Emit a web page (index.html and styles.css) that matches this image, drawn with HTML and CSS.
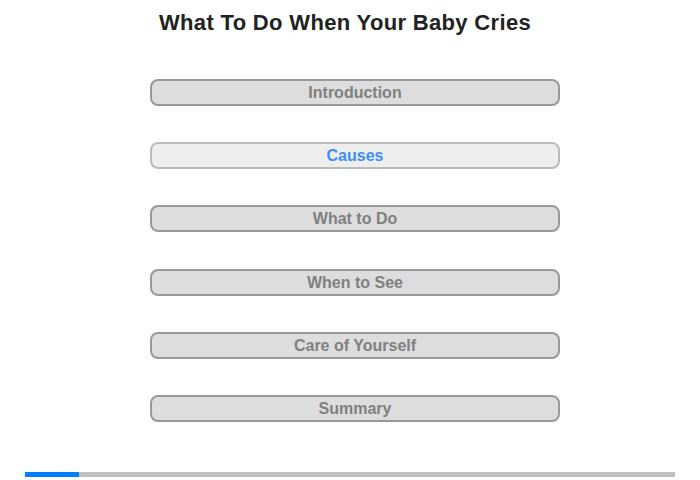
FILE: index.html
```html
<!DOCTYPE html>
<html lang="en">
<head>
    <meta charset="UTF-8">
    <title>What To Do When Your Baby Cries</title>
    <link rel="stylesheet" href="styles.css">
</head>
<body>
    <div class="page">
        <h1 class="title">What To Do When Your Baby Cries</h1>

        <!-- Menu topik -->
        <div class="menu">
            <a class="menu-item" href="#">Introduction</a>
            <a class="menu-item active" href="#">Causes</a>
            <a class="menu-item" href="#">What to Do</a>
            <a class="menu-item" href="#">When to See</a>
            <a class="menu-item" href="#">Care of Yourself</a>
            <a class="menu-item" href="#">Summary</a>
        </div>

        <div class="progress">
            <div class="progress-fill" style="width: 54px;"></div>
        </div>
    </div>
</body>
</html>
```

FILE: styles.css
```css
body {
    font-family: "Liberation Sans", Arial, sans-serif;
    margin: 0;
    padding: 0;
    background-color: #fff;
}

.page {
    width: 700px;
    height: 480px;
    display: flex;
    flex-direction: column;
}

.title {
    margin: 0;
    padding-top: 10px;
    padding-right: 10px;
    font-size: 22px;
    line-height: 26px;
    letter-spacing: 0.33px;
    text-align: center;
    color: #222;
}

.menu {
    display: flex;
    flex-direction: column;
    gap: 36.2px;
    padding-top: 43px;
    padding-left: 150px;
}

.menu-item {
    box-sizing: border-box;
    width: 410px;
    height: 27px;
    line-height: 23px;
    border: 2px solid #999;
    border-radius: 8px;
    background-color: #ddd;
    color: #808080;
    font-size: 16px;
    font-weight: bold;
    text-align: center;
    text-decoration: none;
}

.menu-item.active {
    background-color: #eee;
    border-color: #bbb;
    color: #3d8ef2;
}

.progress {
    margin: 50px 25px 0;
    height: 5px;
    background-color: #c0c0c0;
}

.progress-fill {
    height: 100%;
    background-color: #0080ff;
}
```
